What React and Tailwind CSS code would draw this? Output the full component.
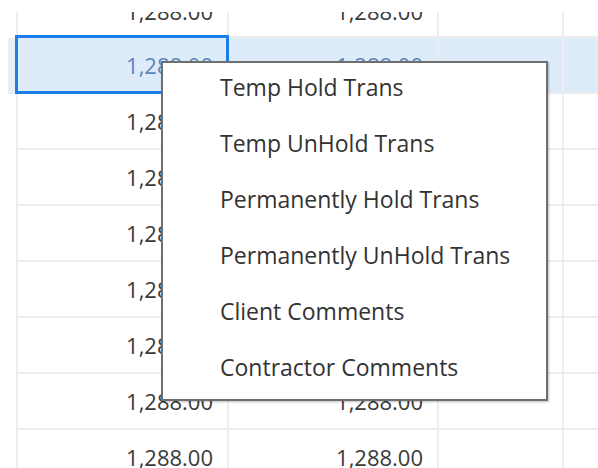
const rows = ['1,288.00', '1,288.00', '1,288.00', '1,288.00', '1,288.00', '1,288.00', '1,288.00', '1,288.00', '1,288.00'];

const menuItems = [
  'Temp Hold Trans',
  'Temp UnHold Trans',
  'Permanently Hold Trans',
  'Permanently UnHold Trans',
  'Client Comments',
  'Contractor Comments',
];

function Row({ value, selected, first }) {
  const pad = first ? 'pt-[5px]' : '';
  return (
    <div className={`flex h-[56px] ${selected ? 'bg-[#deebf8]' : 'bg-white'}`}>
      <div className={`w-[8px] ${selected ? 'bg-white' : ''}`} />
      <div className={`w-[8px] ${selected ? 'bg-[#e6eef7]' : ''}`} />
      <div className={`relative flex w-[211px] items-center justify-end border-l-2 border-b-2 border-[#ececf1] pr-[14px] ${pad}`}>
        <span className={selected ? 'text-[#5a86c0]' : 'text-[#3a3a3a]'}>{value}</span>
        {selected && (
          <div className="absolute -left-[3px] -right-[2px] -top-[3px] -bottom-[2px] border-[3px] border-[#1a7fe8]" />
        )}
      </div>
      <div className={`flex w-[210px] items-center justify-end border-l-2 border-b-2 border-[#ececf1] pr-[14px] ${pad}`}>
        <span className={selected ? 'text-[#5a86c0]' : 'text-[#3a3a3a]'}>{value}</span>
      </div>
      <div className="w-[125px] border-l-2 border-b-2 border-[#ececf1]" />
      <div className="flex-1 border-l-2 border-b-2 border-[#ececf1]" />
    </div>
  );
}

export default function App() {
  return (
    <div className="relative h-[468px] w-[598px] overflow-hidden bg-white text-[22px] font-['Open_Sans',sans-serif]">
      {/* grid body scrolled so the first row is half hidden under the header edge */}
      <div className="-mt-[18px]">
        {rows.map((v, i) => (
          <Row key={i} value={v} selected={i === 1} first={i === 0} />
        ))}
      </div>
      <div className="absolute left-0 right-0 top-0 h-[12px] bg-white" />

      {/* context menu */}
      <div className="absolute left-[161px] top-[61px] w-[387px] border-2 border-[#6f6f6f] bg-white shadow-[1px_1px_2px_rgba(0,0,0,0.25)]">
        {menuItems.map((item) => (
          <div key={item} className="flex h-[56px] items-center pb-[7px] pl-[57px] text-[23px] text-[#333]">
            {item}
          </div>
        ))}
      </div>
    </div>
  );
}
